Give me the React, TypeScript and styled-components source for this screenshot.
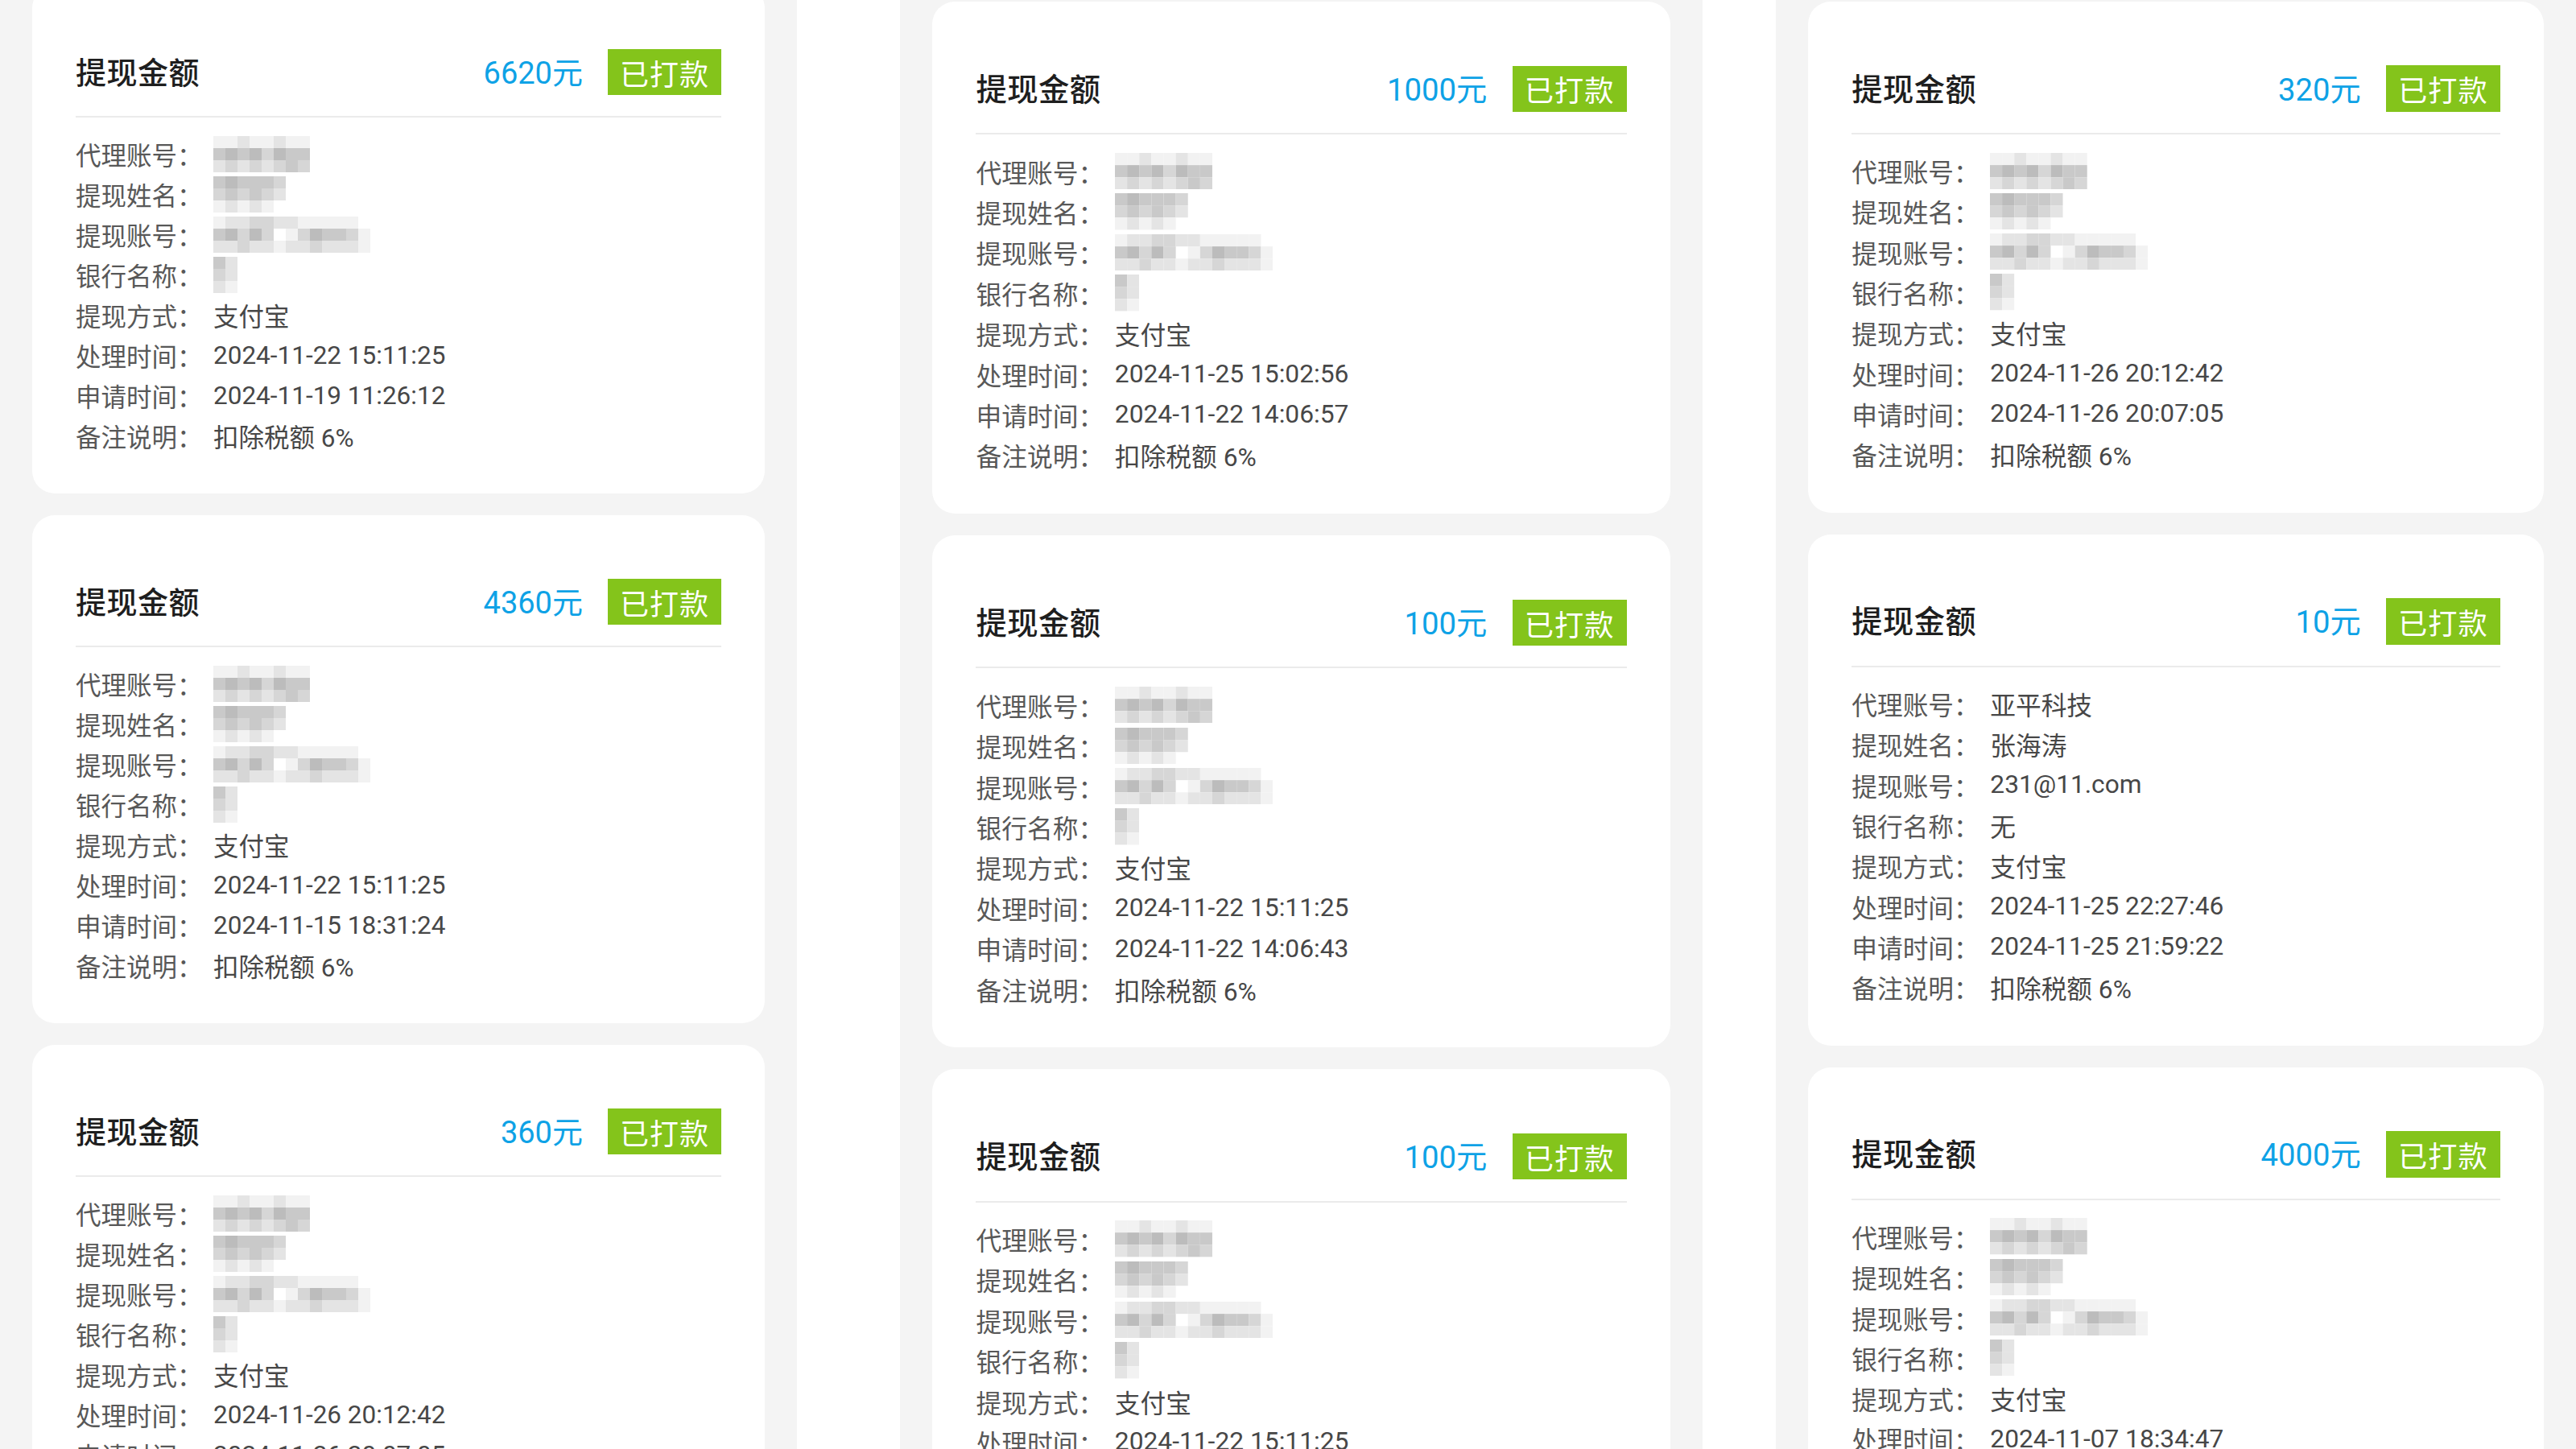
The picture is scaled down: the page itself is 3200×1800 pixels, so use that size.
import styled, { createGlobalStyle } from "styled-components";

const GlobalStyle = createGlobalStyle`
  html, body {
    margin: 0;
    padding: 0;
    background: #ffffff;
  }
  body {
    width: 3200px;
    height: 1800px;
    overflow: hidden;
    font-family: Roboto, "Noto Sans CJK SC", "Noto Sans", sans-serif;
  }
`;

const Page = styled.div`
  display: flex;
  width: 3200px;
  height: 1800px;
  overflow: hidden;
  background: #ffffff;
`;

const Panel = styled.div<{ $width: number; $gap: number; $top: number }>`
  flex: 0 0 ${({ $width }) => $width}px;
  margin-right: ${({ $gap }) => $gap}px;
  height: 1800px;
  overflow: hidden;
  background: #f4f4f4;
  padding: ${({ $top }) => Math.max($top, 0)}px 40px 0 40px;
  box-sizing: border-box;
`;

const CardList = styled.div<{ $zoom: number; $shift: number }>`
  display: flex;
  flex-direction: column;
  gap: 27px;
  zoom: ${({ $zoom }) => $zoom};
  margin-top: ${({ $shift }) => $shift}px;
`;

const Card = styled.div`
  background: #ffffff;
  border-radius: 28px;
  padding: 79px 54px 47px 54px;
`;

const Header = styled.div`
  display: flex;
  align-items: center;
  justify-content: space-between;
  height: 57px;
  margin-bottom: 26px;
`;

const Title = styled.div`
  font-size: 38px;
  font-weight: 500;
  color: #1e1e1e;
  letter-spacing: 0.5px;
  margin-top: -4px;
`;

const Right = styled.div`
  display: flex;
  align-items: center;
  gap: 31px;
`;

const Amount = styled.span`
  font-size: 38px;
  color: #0ea2e6;
  margin-top: -4px;
`;

const Badge = styled.span`
  display: inline-flex;
  align-items: center;
  justify-content: center;
  height: 57px;
  padding: 0 15px;
  background: #84c41b;
  color: #ffffff;
  font-size: 36px;
  letter-spacing: 1px;
`;

const Divider = styled.div`
  height: 2px;
  background: #ebebeb;
  margin-bottom: 20px;
`;

const Row = styled.div`
  display: flex;
  align-items: center;
  height: 50px;
  font-size: 31.5px;
  white-space: nowrap;
`;

const Label = styled.span`
  flex: 0 0 171px;
  color: #585858;
`;

const Value = styled.span`
  color: #474747;
  display: inline-flex;
  align-items: center;
`;

const shades = ["transparent", "#f2f2f2", "#e4e4e4", "#d6d6d6", "#c9c9c9", "#bcbcbc"];

const masks: Record<string, string[]> = {
  agent: ["11211211", "45453544", "23232343"],
  name: ["454443", "343432", "121210"],
  account: ["1223322111110", "4535301354431", "2232212232221"],
  bank: ["42", "32", "21"],
};

function Mosaic({ kind }: { kind: keyof typeof masks }) {
  const rows = masks[kind];
  const cell = 15;
  const w = rows[0].length * cell;
  const h = rows.length * cell;
  return (
    <svg width={w} height={h} viewBox={`0 0 ${w} ${h}`} style={{ display: "block" }}>
      {rows.map((r, y) =>
        r.split("").map((c, x) =>
          c === "0" ? null : (
            <rect key={`${x}-${y}`} x={x * cell} y={y * cell} width={cell} height={cell} fill={shades[Number(c)]} />
          )
        )
      )}
    </svg>
  );
}

interface Withdrawal {
  amount: string;
  agent?: string;
  name?: string;
  account?: string;
  bank?: string;
  processed: string;
  applied: string;
}

function WithdrawCard({ r }: { r: Withdrawal }) {
  return (
    <Card>
      <Header>
        <Title>提现金额</Title>
        <Right>
          <Amount>{r.amount}元</Amount>
          <Badge>已打款</Badge>
        </Right>
      </Header>
      <Divider />
      <Row>
        <Label>代理账号：</Label>
        <Value>{r.agent ?? <Mosaic kind="agent" />}</Value>
      </Row>
      <Row>
        <Label>提现姓名：</Label>
        <Value>{r.name ?? <Mosaic kind="name" />}</Value>
      </Row>
      <Row>
        <Label>提现账号：</Label>
        <Value>{r.account ?? <Mosaic kind="account" />}</Value>
      </Row>
      <Row>
        <Label>银行名称：</Label>
        <Value>{r.bank ?? <Mosaic kind="bank" />}</Value>
      </Row>
      <Row>
        <Label>提现方式：</Label>
        <Value>支付宝</Value>
      </Row>
      <Row>
        <Label>处理时间：</Label>
        <Value>{r.processed}</Value>
      </Row>
      <Row>
        <Label>申请时间：</Label>
        <Value>{r.applied}</Value>
      </Row>
      <Row>
        <Label>备注说明：</Label>
        <Value>扣除税额 6%</Value>
      </Row>
    </Card>
  );
}

const panels: { width: number; gap: number; top: number; zoom: number; items: Withdrawal[] }[] = [
  {
    width: 990,
    gap: 128,
    top: -18,
    zoom: 1,
    items: [
      { amount: "6620", processed: "2024-11-22 15:11:25", applied: "2024-11-19 11:26:12" },
      { amount: "4360", processed: "2024-11-22 15:11:25", applied: "2024-11-15 18:31:24" },
      { amount: "360", processed: "2024-11-26 20:12:42", applied: "2024-11-26 20:07:05" },
    ],
  },
  {
    width: 997,
    gap: 91,
    top: 2,
    zoom: 1.008,
    items: [
      { amount: "1000", processed: "2024-11-25 15:02:56", applied: "2024-11-22 14:06:57" },
      { amount: "100", processed: "2024-11-22 15:11:25", applied: "2024-11-22 14:06:43" },
      { amount: "100", processed: "2024-11-22 15:11:25", applied: "2024-11-22 14:06:31" },
    ],
  },
  {
    width: 994,
    gap: 0,
    top: 2,
    zoom: 1.006,
    items: [
      { amount: "320", processed: "2024-11-26 20:12:42", applied: "2024-11-26 20:07:05" },
      {
        amount: "10",
        agent: "亚平科技",
        name: "张海涛",
        account: "231@11.com",
        bank: "无",
        processed: "2024-11-25 22:27:46",
        applied: "2024-11-25 21:59:22",
      },
      { amount: "4000", processed: "2024-11-07 18:34:47", applied: "2024-11-07 18:30:12" },
    ],
  },
];

export default function App() {
  return (
    <>
      <GlobalStyle />
      <Page>
        {panels.map((p, i) => (
          <Panel key={i} $width={p.width} $gap={p.gap} $top={p.top}>
            <CardList $zoom={p.zoom} $shift={Math.min(p.top, 0)}>
              {p.items.map((r, j) => (
                <WithdrawCard key={j} r={r} />
              ))}
            </CardList>
          </Panel>
        ))}
      </Page>
    </>
  );
}
